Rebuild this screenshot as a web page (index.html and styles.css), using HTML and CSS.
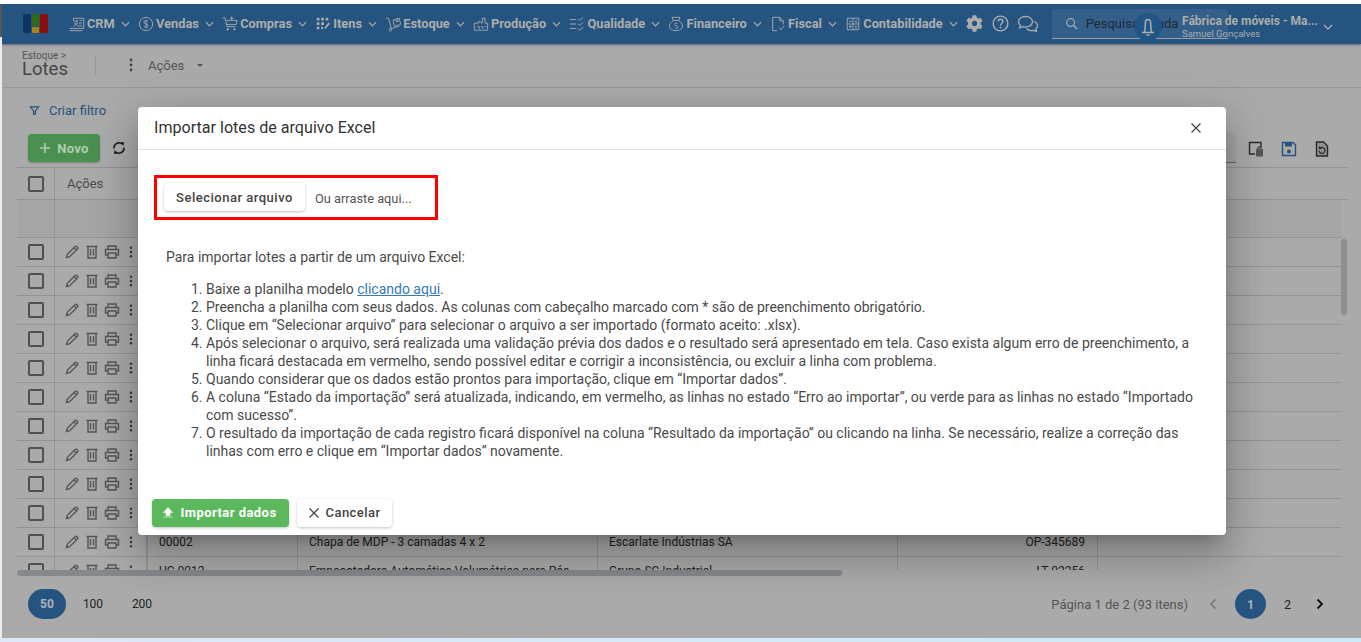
FILE: index.html
```html
<!DOCTYPE html>
<html lang="pt-BR">
<head>
<meta charset="utf-8">
<title>Lotes</title>
<link rel="stylesheet" href="styles.css">
</head>
<body>
<svg class="defs" width="0" height="0" aria-hidden="true">
  <symbol id="chev" viewBox="0 0 10 6"><path d="M1 1l4 4 4-4" fill="none" stroke="currentColor" stroke-width="1.3"/></symbol>
  <symbol id="pencil" viewBox="0 0 16 16"><path d="M2.5 13.5l.8-3.2 7.8-7.8a1.2 1.2 0 0 1 1.7 0l.7.7a1.2 1.2 0 0 1 0 1.7l-7.8 7.8zM10 3.6l2.4 2.4" fill="none" stroke="currentColor" stroke-width="1.4"/></symbol>
  <symbol id="trash" viewBox="0 0 16 16"><path d="M2.500 2.500h11M4 2.500v11.500h8V2.500M6.500 5v6.500M9.500 5v6.500" fill="none" stroke="currentColor" stroke-width="1.4"/></symbol>
  <symbol id="print" viewBox="0 0 16 16"><path d="M4 5V2h8v3M4 11H1.500V5.500h13V11H12M4 9h8v5H4z" fill="none" stroke="currentColor" stroke-width="1.4"/></symbol>
  <symbol id="kebab" viewBox="0 0 4 14"><circle cx="2" cy="2" r="1.4" fill="currentColor"/><circle cx="2" cy="7" r="1.4" fill="currentColor"/><circle cx="2" cy="12" r="1.4" fill="currentColor"/></symbol>
  <symbol id="close" viewBox="0 0 12 12"><path d="M1.500 1.500l9 9M10.500 1.500l-9 9" fill="none" stroke="currentColor" stroke-width="1.2"/></symbol>
</svg>

<div class="frame">
  <header class="topbar">
    <svg class="logo" viewBox="0 0 25 19" aria-hidden="true">
      <rect x="0" y="0" width="8" height="19" rx="1.5" fill="#0c3660"/>
      <rect x="9" y="0" width="7" height="12" rx="1" fill="#2f6b10"/>
      <rect x="9" y="13" width="7" height="6" rx="1" fill="#ad8010"/>
      <rect x="17" y="0" width="8" height="19" rx="1.5" fill="#8b0d0d"/>
    </svg>
    <nav class="nav">
      <a class="nav-item">
        <svg class="nav-ico" viewBox="0 0 18 18"><path d="M5 6V2.500h11.500V14H1M1 16.500h14M8 5h2M12 5h2.500M11 8h3.500M11 11h3.500" fill="none" stroke="currentColor"/><circle cx="8" cy="7.500" r="1.600" fill="none" stroke="currentColor"/><path d="M5.500 12c0-3 5-3 5 0" fill="none" stroke="currentColor"/></svg>
        <span>CRM</span><svg class="chev"><use href="#chev"/></svg>
      </a>
      <a class="nav-item">
        <svg class="nav-ico" viewBox="0 0 18 18"><circle cx="9" cy="9" r="7.500" fill="none" stroke="currentColor"/><path d="M11.500 6.500C11 5 6.500 5 6.500 7c0 2.500 5 1.500 5 4 0 2-4.500 2-5 .5M9 4v10" fill="none" stroke="currentColor"/></svg>
        <span>Vendas</span><svg class="chev"><use href="#chev"/></svg>
      </a>
      <a class="nav-item">
        <svg class="nav-ico" viewBox="0 0 18 18"><path d="M1 2h2.500l2 10h10M5 5h12l-1 4.500H5.500M11 .5v4M9 2.500h4" fill="none" stroke="currentColor"/><circle cx="6.500" cy="15" r="1.300" fill="currentColor"/><circle cx="14" cy="15" r="1.300" fill="currentColor"/></svg>
        <span>Compras</span><svg class="chev"><use href="#chev"/></svg>
      </a>
      <a class="nav-item">
        <svg class="nav-ico" viewBox="0 0 18 18"><path d="M2 2h3v3H2zM7 2h3v3H7zM12 2h3v3h-3zM2 7h3v3H2zM7 7h3v3H7zM2 12h3v3H2zM7 12h2v3H7z" fill="currentColor"/><path d="M11 14l5-6" fill="none" stroke="currentColor" stroke-width="2"/></svg>
        <span>Itens</span><svg class="chev"><use href="#chev"/></svg>
      </a>
      <a class="nav-item">
        <svg class="nav-ico" viewBox="0 0 18 18"><path d="M1 2l3 1 3 11M9 4.500l7-2 1.500 7-7 2zM12 3.500l.8 3 2-.5-.8-3M7 14l9-2.500" fill="none" stroke="currentColor"/><circle cx="6" cy="15.500" r="1.500" fill="none" stroke="currentColor"/></svg>
        <span>Estoque</span><svg class="chev"><use href="#chev"/></svg>
      </a>
      <a class="nav-item">
        <svg class="nav-ico" viewBox="0 0 18 18"><path d="M1.500 16V8l5 0V6l4 2V2.500h3V8h3v8zM5 12h2v2.500M9 12h2v2.500M13 12h2" fill="none" stroke="currentColor"/></svg>
        <span>Produção</span><svg class="chev"><use href="#chev"/></svg>
      </a>
      <a class="nav-item">
        <svg class="nav-ico" viewBox="0 0 18 18"><path d="M1 4h7M1 9h7M1 14h7M10 3l2 2 4-3.500M10 8.500l2 2 4-3.500M10 14l2 2 4-3.500" fill="none" stroke="currentColor"/></svg>
        <span>Qualidade</span><svg class="chev"><use href="#chev"/></svg>
      </a>
      <a class="nav-item">
        <svg class="nav-ico" viewBox="0 0 18 18"><path d="M6 5L4.500 1.500h9L12 5zM6 5c-8 6-4 11.500 3 11.500S20 11 12 5" fill="none" stroke="currentColor"/><path d="M11 8.500C10.500 7.500 7.500 7.500 7.500 9.500s3.500 1 3.500 3-3 1.500-3.500.5" fill="none" stroke="currentColor"/></svg>
        <span>Financeiro</span><svg class="chev"><use href="#chev"/></svg>
      </a>
      <a class="nav-item">
        <svg class="nav-ico" viewBox="0 0 18 18"><path d="M8 16.500H3v-15h8l4 4v4M11 1.500v4h4M10 13l2.500 2.500L16 11" fill="none" stroke="currentColor"/></svg>
        <span>Fiscal</span><svg class="chev"><use href="#chev"/></svg>
      </a>
      <a class="nav-item">
        <svg class="nav-ico" viewBox="0 0 18 18"><path d="M2.500 2.500h13v13h-13zM2.500 9h13M9 2.500v13M4.500 6h3M11 5l2.500 2.500M13.500 5L11 7.500M4.500 12h3M6 10.500v3M11 11.500h2.500M11 13.500h2.500" fill="none" stroke="currentColor"/></svg>
        <span>Contabilidade</span><svg class="chev"><use href="#chev"/></svg>
      </a>
    </nav>
    <div class="top-tools">
      <svg class="tool-ico" viewBox="0 0 512 512"><path fill="currentColor" d="M487 316l-43-25c4-23 4-47 0-70l43-25c5-3 7-9 6-14-11-36-30-68-55-95-4-4-10-5-15-2l-43 25c-18-15-39-27-61-35V25c0-6-4-11-9-12-37-8-75-8-110 0-6 1-10 6-10 12v50c-22 8-43 20-61 35L86 85c-5-3-11-2-15 2-25 27-44 59-55 95-2 5 1 11 6 14l43 25c-4 23-4 47 0 70l-43 25c-5 3-8 9-6 14 11 36 30 68 55 95 4 4 10 5 15 2l43-25c18 15 39 27 61 35v50c0 6 4 11 10 12 37 8 75 8 110 0 5-1 9-6 9-12v-50c22-8 43-20 61-35l43 25c5 3 11 2 15-2 25-27 44-59 55-95 1-5-1-11-6-14zM256 336c-44 0-80-36-80-80s36-80 80-80 80 36 80 80-36 80-80 80z"/></svg>
      <svg class="tool-ico" viewBox="0 0 18 18"><circle cx="9" cy="9" r="7.800" fill="none" stroke="currentColor" stroke-width="1.500"/><path d="M6.500 7c0-3.300 5-3.300 5 0 0 2-2.500 2-2.500 4" fill="none" stroke="currentColor" stroke-width="1.500"/><circle cx="9" cy="13.300" r="1" fill="currentColor"/></svg>
      <svg class="tool-ico tool-chat" viewBox="0 0 22 18"><path d="M8.500 1.500c-4 0-7 2.300-7 5.300 0 1.500.8 2.800 2 3.700L2.500 13l3.500-1.300c3.500 1 9.500-.5 9.500-5 0-3-3-5.200-7-5.200zM17 6.500c2.200.8 3.500 2.500 3.500 4.300 0 1.300-.7 2.400-1.800 3.200l.8 2.500-3.200-1.200c-2.500.6-5.300 0-6.800-1.800" fill="none" stroke="currentColor" stroke-width="1.300"/></svg>
    </div>
    <div class="search">
      <svg class="search-ico" viewBox="0 0 14 14"><circle cx="6" cy="6" r="4.200" fill="none" stroke="currentColor" stroke-width="1.300"/><path d="M9 9l4 4" stroke="currentColor" stroke-width="1.500"/></svg>
      <span class="search-text">Pesquisar ajuda</span>
    </div>
    <div class="account">
      <span class="bell">
        <svg viewBox="0 0 16 20"><path d="M2 15.500h12M6.500 18h3M4.500 15.500c1-4 .5-8 1-10.500a2.500 2.500 0 0 1 5 0c.5 2.500 0 6.500 1 10.500" fill="none" stroke="currentColor" stroke-width="1.500"/></svg>
      </span>
      <span class="org"><b>Fábrica de móveis - Ma...</b><small>Samuel Gonçalves</small></span>
      <svg class="chev chev-org"><use href="#chev"/></svg>
    </div>
  </header>

  <section class="subhead">
    <div class="crumb"><small>Estoque &gt;</small><h1>Lotes</h1></div>
    <div class="sub-actions">
      <svg class="kebab-sm"><use href="#kebab"/></svg>
      <span>Ações</span>
      <i class="caret"></i>
    </div>
  </section>

  <div class="filterbar">
    <svg class="funnel" viewBox="0 0 12 12"><path d="M1.500 2h9L7 6.500V10H5V6.500z" fill="none" stroke="currentColor" stroke-width="1.300"/></svg>
    <span>Criar filtro</span>
  </div>

  <div class="toolbar">
    <button class="btn-new"><svg viewBox="0 0 12 12"><path d="M6 1v10M1 6h10" stroke="currentColor" stroke-width="1.600"/></svg>Novo</button>
    <svg class="refresh" viewBox="0 0 14 14"><path d="M2 7.500A5 5 0 0 1 10.500 3.300M12 6.500A5 5 0 0 1 3.500 10.700" fill="none" stroke="currentColor" stroke-width="1.400"/><path d="M9 1l3 .5-.5 3.500zM5 13l-3-.5.5-3.500z" fill="currentColor"/></svg>
    <span class="tb-spacer"></span>
    <span class="tb-input"></span>
    <div class="tb-icons">
      <svg viewBox="0 0 16 16"><path d="M13 6V1.500H1.500V13H7" fill="none" stroke="#2a2a2e" stroke-width="1.400"/><rect x="8" y="7.500" width="7" height="8" rx="1" fill="#55575a"/><path d="M10 7.500V6h3v1.500" fill="none" stroke="#2a2a2e"/></svg>
      <svg viewBox="0 0 16 16"><path d="M2 1.500h10l2.500 2.500v10.500H1.500v-13z" fill="none" stroke="#24547f" stroke-width="1.400"/><path d="M4 1.500h7v4H4z" fill="#24547f"/><circle cx="8" cy="10.500" r="2" fill="#24547f"/></svg>
      <svg viewBox="0 0 16 16"><path d="M2.500 1h7l4 4v10h-11z" fill="#8f8f8f" stroke="#2a2a2e" stroke-width="1.400"/><path d="M5 9.500a3 3 0 1 0 1-2.300M5.500 5.500v2h2" fill="none" stroke="#2a2a2e" stroke-width="1.200"/></svg>
    </div>
  </div>

  <div class="table">
    <div class="thead">
      <span class="c-check"><i class="check"></i></span>
      <span class="c-actions th-label">Ações</span>
    </div>
    <div class="tfilter"><span class="c-check"></span><span class="c-actions"></span></div>
    <div class="tbody">
      <div class="rows">
        <div class="row"><span class="c-check"><i class="check"></i></span><span class="c-actions"><svg><use href="#pencil"/></svg><svg><use href="#trash"/></svg><svg><use href="#print"/></svg><svg class="k"><use href="#kebab"/></svg></span><span class="c-code"></span><span class="c-desc"></span><span class="c-sup"></span><span class="c-lot"></span></div>
        <div class="row"><span class="c-check"><i class="check"></i></span><span class="c-actions"><svg><use href="#pencil"/></svg><svg><use href="#trash"/></svg><svg><use href="#print"/></svg><svg class="k"><use href="#kebab"/></svg></span><span class="c-code"></span><span class="c-desc"></span><span class="c-sup"></span><span class="c-lot"></span></div>
        <div class="row"><span class="c-check"><i class="check"></i></span><span class="c-actions"><svg><use href="#pencil"/></svg><svg><use href="#trash"/></svg><svg><use href="#print"/></svg><svg class="k"><use href="#kebab"/></svg></span><span class="c-code"></span><span class="c-desc"></span><span class="c-sup"></span><span class="c-lot"></span></div>
        <div class="row"><span class="c-check"><i class="check"></i></span><span class="c-actions"><svg><use href="#pencil"/></svg><svg><use href="#trash"/></svg><svg><use href="#print"/></svg><svg class="k"><use href="#kebab"/></svg></span><span class="c-code"></span><span class="c-desc"></span><span class="c-sup"></span><span class="c-lot"></span></div>
        <div class="row"><span class="c-check"><i class="check"></i></span><span class="c-actions"><svg><use href="#pencil"/></svg><svg><use href="#trash"/></svg><svg><use href="#print"/></svg><svg class="k"><use href="#kebab"/></svg></span><span class="c-code"></span><span class="c-desc"></span><span class="c-sup"></span><span class="c-lot"></span></div>
        <div class="row"><span class="c-check"><i class="check"></i></span><span class="c-actions"><svg><use href="#pencil"/></svg><svg><use href="#trash"/></svg><svg><use href="#print"/></svg><svg class="k"><use href="#kebab"/></svg></span><span class="c-code"></span><span class="c-desc"></span><span class="c-sup"></span><span class="c-lot"></span></div>
        <div class="row"><span class="c-check"><i class="check"></i></span><span class="c-actions"><svg><use href="#pencil"/></svg><svg><use href="#trash"/></svg><svg><use href="#print"/></svg><svg class="k"><use href="#kebab"/></svg></span><span class="c-code"></span><span class="c-desc"></span><span class="c-sup"></span><span class="c-lot"></span></div>
        <div class="row"><span class="c-check"><i class="check"></i></span><span class="c-actions"><svg><use href="#pencil"/></svg><svg><use href="#trash"/></svg><svg><use href="#print"/></svg><svg class="k"><use href="#kebab"/></svg></span><span class="c-code"></span><span class="c-desc"></span><span class="c-sup"></span><span class="c-lot"></span></div>
        <div class="row"><span class="c-check"><i class="check"></i></span><span class="c-actions"><svg><use href="#pencil"/></svg><svg><use href="#trash"/></svg><svg><use href="#print"/></svg><svg class="k"><use href="#kebab"/></svg></span><span class="c-code"></span><span class="c-desc"></span><span class="c-sup"></span><span class="c-lot"></span></div>
        <div class="row"><span class="c-check"><i class="check"></i></span><span class="c-actions"><svg><use href="#pencil"/></svg><svg><use href="#trash"/></svg><svg><use href="#print"/></svg><svg class="k"><use href="#kebab"/></svg></span><span class="c-code"></span><span class="c-desc"></span><span class="c-sup"></span><span class="c-lot"></span></div>
        <div class="row"><span class="c-check"><i class="check"></i></span><span class="c-actions"><svg><use href="#pencil"/></svg><svg><use href="#trash"/></svg><svg><use href="#print"/></svg><svg class="k"><use href="#kebab"/></svg></span><span class="c-code">00002</span><span class="c-desc">Chapa de MDP - 3 camadas 4 x 2</span><span class="c-sup">Escarlate Indústrias SA</span><span class="c-lot">OP-345689</span></div>
        <div class="row"><span class="c-check"><i class="check"></i></span><span class="c-actions"><svg><use href="#pencil"/></svg><svg><use href="#trash"/></svg><svg><use href="#print"/></svg><svg class="k"><use href="#kebab"/></svg></span><span class="c-code">UC 0012</span><span class="c-desc">Empacotadora Automática Volumétrica para Pós</span><span class="c-sup">Grupo SC Industrial</span><span class="c-lot">LT 02256</span></div>
      </div>
      <div class="vscroll"><i></i></div>
    </div>
    <div class="hscroll"><i></i></div>
  </div>

  <footer class="pager">
    <div class="sizes"><span class="size on">50</span><span class="size">100</span><span class="size">200</span></div>
    <div class="pages">
      <span class="page-info">Página 1 de 2 (93 itens)</span>
      <svg class="arrow off" viewBox="0 0 8 12"><path d="M6.500 1.500L2 6l4.500 4.500" fill="none" stroke="currentColor" stroke-width="1.500"/></svg>
      <span class="page on">1</span>
      <span class="page">2</span>
      <svg class="arrow" viewBox="0 0 8 12"><path d="M1.500 1.500L6 6l-4.500 4.500" fill="none" stroke="currentColor" stroke-width="1.800"/></svg>
    </div>
  </footer>

  <div class="modal" role="dialog">
    <div class="modal-head">
      <h2>Importar lotes de arquivo Excel</h2>
      <svg class="modal-close"><use href="#close"/></svg>
    </div>
    <div class="modal-body">
      <div class="upload">
        <button class="btn-file">Selecionar arquivo</button>
        <span class="drop-hint">Ou arraste aqui...</span>
      </div>
      <div class="help">
        <p>Para importar lotes a partir de um arquivo Excel:</p>
        <ol>
          <li>Baixe a planilha modelo <a href="#">clicando aqui</a>.</li>
          <li>Preencha a planilha com seus dados. As colunas com cabeçalho marcado com * são de preenchimento obrigatório.</li>
          <li>Clique em “Selecionar arquivo” para selecionar o arquivo a ser importado (formato aceito: .xlsx).</li>
          <li>Após selecionar o arquivo, será realizada uma validação prévia dos dados e o resultado será apresentado em tela. Caso exista algum erro de preenchimento, a linha ficará destacada em vermelho, sendo possível editar e corrigir a inconsistência, ou excluir a linha com problema.</li>
          <li>Quando considerar que os dados estão prontos para importação, clique em “Importar dados”.</li>
          <li>A coluna “Estado da importação” será atualizada, indicando, em vermelho, as linhas no estado “Erro ao importar”, ou verde para as linhas no estado “Importado com sucesso”.</li>
          <li>O resultado da importação de cada registro ficará disponível na coluna “Resultado da importação” ou clicando na linha. Se necessário, realize a correção das linhas com erro e clique em “Importar dados” novamente.</li>
        </ol>
      </div>
    </div>
    <div class="modal-foot">
      <button class="btn-import"><svg viewBox="0 0 12 12"><path d="M6 1L1.500 6H4v3h4V6h2.500zM1.500 10.500h9" fill="currentColor" stroke="currentColor" stroke-width=".6"/></svg>Importar dados</button>
      <button class="btn-cancel"><svg><use href="#close"/></svg>Cancelar</button>
    </div>
  </div>
</div>

<div class="bottom-strip"></div>
</body>
</html>
```

FILE: styles.css
```css
* { box-sizing: border-box; }
html, body { height: 100%; }
body {
  margin: 0;
  padding: 4px 0 0 2px;
  height: 642px;
  overflow: hidden;
  display: flex;
  flex-direction: column;
  font-family: Roboto, "Liberation Sans", sans-serif;
  color: #444;
  background: linear-gradient(to bottom, #fff 4px, #555 4px, #555 37px, #ececec 37px);
}
.defs { position: absolute; }
.frame {
  position: relative;
  flex: 1;
  min-height: 0;
  display: flex;
  flex-direction: column;
  overflow: hidden;
  background: #aaaaaa;
}
.bottom-strip {
  flex: 0 0 4px;
  margin-left: -2px;
  background: linear-gradient(to right, #dfe8f7, #cdeaf6);
}

/* top bar */
.topbar {
  flex: 0 0 40px;
  position: relative;
  z-index: 1;
  display: flex;
  align-items: center;
  background: #24547f;
  color: #adadad;
  box-shadow: 0 1px 2px rgba(0,0,0,.4);
  padding-left: 21px;
}
.logo { width: 25px; height: 19px; flex: none; margin: 0 21px 2px 0; }
.nav { display: flex; align-items: center; gap: 8.300px; padding-bottom: 1px; }
.nav-item {
  display: flex;
  align-items: center;
  gap: 2px;
  font-size: 12.800px;
  font-weight: 700;
  white-space: nowrap;
}
.nav-ico { width: 16px; height: 16px; flex: none; }
.chev { width: 9px; height: 6px; margin-left: 4px; flex: none; }
.top-tools { display: flex; align-items: center; gap: 9px; margin-left: 8px; padding-bottom: 1px; }
.tool-ico { width: 17px; height: 17px; flex: none; }
.tool-chat { width: 22px; height: 18px; margin-left: -1px; }
.search {
  display: flex;
  align-items: center;
  width: 176px;
  height: 30px;
  margin-left: 13px;
  padding-left: 13px;
  background: #335f88;
  border-bottom: 1px solid #8ba0b5;
  border-radius: 3px 3px 0 0;
  font-size: 13px;
  color: #1c2a38;
}
.search-ico { width: 13px; height: 13px; margin-right: 8px; color: #9fb0c0; }
.account {
  position: absolute;
  top: 0;
  left: 1132px;
  height: 40px;
  display: flex;
  align-items: center;
}
.bell {
  width: 28px;
  height: 28px;
  margin-top: 5px;
  border-radius: 50%;
  background: #205686;
  display: flex;
  align-items: center;
  justify-content: center;
}
.bell svg { width: 16px; height: 20px; }
.org { display: flex; flex-direction: column; margin: 6px 0 0 20px; width: 141px; }
.org b { font-size: 12px; font-weight: 700; line-height: 14px; white-space: nowrap; }
.org small { font-size: 9.500px; line-height: 12px; }
.chev-org { width: 10px; height: 6px; margin: 6px 0 0 0; }

/* sub header */
.subhead {
  flex: 0 0 44px;
  display: flex;
  align-items: center;
  padding-left: 20px;
  border-bottom: 1px solid #989898;
}
.crumb { width: 73px; margin-top: -2px; }
.crumb small { display: block; font-size: 10px; line-height: 10px; color: #555; }
.crumb h1 { margin: 0; font-size: 18.500px; line-height: 17px; font-weight: 400; color: #464646; }
.sub-actions {
  height: 20px;
  display: flex;
  align-items: center;
  padding-left: 33px;
  border-left: 1px solid #989898;
  font-size: 13px;
  color: #555;
  margin-top: -1px;
}
.kebab-sm { width: 4px; height: 14px; margin-right: 15px; color: #444; }
.caret {
  margin-left: 13px;
  border: 3px solid transparent;
  border-top: 3.500px solid #555;
  border-bottom: 0;
}

/* filter */
.filterbar {
  flex: 0 0 46px;
  display: flex;
  align-items: center;
  padding: 0 0 1px 27px;
  font-size: 13px;
  color: #27527a;
}
.funnel { width: 11px; height: 11px; margin-right: 9px; }

/* toolbar */
.toolbar {
  flex: 0 0 30px;
  display: flex;
  align-items: flex-start;
  padding-left: 26px;
}
.btn-new {
  height: 28px;
  width: 72px;
  padding: 0;
  border: 0;
  border-radius: 4px;
  background: #4a9050;
  color: #afcdb0;
  font: 700 13px Roboto, sans-serif;
  letter-spacing: .3px;
  display: flex;
  align-items: center;
  justify-content: center;
  gap: 6px;
  box-shadow: 0 1px 2px rgba(0,0,0,.25);
}
.btn-new svg { width: 12px; height: 12px; }
.refresh { width: 14px; height: 14px; margin: 7px 0 0 12px; color: #111; }
.tb-spacer { flex: 1; }
.tb-input { width: 12px; height: 30px; background: #a4a4a4; border-bottom: 1px solid #666; margin-right: 12px; margin-top: -1px; }
.tb-icons { display: flex; gap: 17px; padding: 7px 31px 0 0; }
.tb-icons svg { width: 16px; height: 16px; }

/* table */
.table { margin: 3px 14px 0 15px; display: flex; flex-direction: column; }
.thead, .tfilter, .row { display: flex; }
.thead { height: 33px; border-top: 1px solid #939393; border-bottom: 1px solid #939393; }
.tfilter { height: 38px; margin-right: 6px; background: #a5a5a5; border-bottom: 1px solid #939393; }
.c-check { flex: 0 0 38px; display: flex; align-items: center; padding-left: 11px; border-right: 1px solid #939393; }
.c-actions { flex: 0 0 93px; display: flex; align-items: center; padding-left: 9px; gap: 5px; border-right: 2px solid #939393; }
.th-label { font-size: 13px; color: #4a4a4a; padding-left: 12px; border-right: 0; }
.tfilter .c-actions { border-right: 0; }
.check { display: block; width: 16px; height: 16px; border: 2px solid #505050; border-radius: 2px; }
.tbody { position: relative; display: flex; height: 332px; overflow: hidden; }
.rows { flex: 1; }
.row { height: 29px; border-bottom: 1px solid #939393; font-size: 12px; color: #222; align-items: stretch; }
.row > span { display: flex; align-items: center; }
.row .c-actions svg { width: 16px; height: 16px; color: #555; flex: none; }
.row .c-actions svg:nth-child(2) { margin-left: -1px; }
.row .c-actions svg:nth-child(3) { margin-left: -1px; }
.row .c-actions .k { width: 4px; height: 12px; color: #3a3a3a; margin-left: 4px; }
.c-code, .c-desc, .c-sup, .c-lot { border-right: 1px solid #939393; white-space: nowrap; overflow: hidden; }
.c-code { flex: 0 0 150px; padding-left: 11px; }
.c-desc { flex: 0 0 300px; padding-left: 11px; }
.c-sup { flex: 0 0 300px; padding-left: 11px; }
.c-lot { flex: 0 0 200px; justify-content: flex-end; padding-right: 12px; }
.vscroll { flex: 0 0 6px; }
.vscroll i { display: block; height: 76px; margin-top: 1px; background: #8e9194; border-radius: 3px; }
.hscroll { height: 6px; }
.hscroll i { display: block; width: 825px; height: 6px; background: #85898d; border-radius: 3px; }

/* pager */
.pager {
  flex: 1;
  display: flex;
  align-items: center;
  justify-content: space-between;
  padding: 0 37px 6px 26px;
  font-size: 12px;
  color: #222;
}
.sizes { display: flex; align-items: center; gap: 11px; }
.size { min-width: 38px; height: 30px; display: flex; align-items: center; justify-content: center; }
.size.on { background: #24547f; color: #adb5bc; font-weight: 700; border-radius: 15px; margin-right: -3px; }
.pages { display: flex; align-items: center; }
.page-info { color: #555; font-size: 13px; margin-right: 21px; }
.arrow { width: 8px; height: 12px; color: #111; }
.arrow.off { color: #777; margin-right: 18px; }
.page { width: 31px; height: 30px; display: flex; align-items: center; justify-content: center; font-size: 12.500px; margin-right: 6px; }
.page.on { background: #24547f; color: #adb5bc; font-weight: 700; border-radius: 50%; }
.page + .arrow { margin-left: 7px; }

/* dialog */
.modal {
  position: absolute;
  z-index: 3;
  left: 136px;
  top: 103px;
  width: 1088px;
  height: 428px;
  display: flex;
  flex-direction: column;
  background: #fff;
  border-radius: 4px;
  box-shadow: 0 11px 15px -7px rgba(0,0,0,.2), 0 24px 38px 3px rgba(0,0,0,.14), 0 9px 46px 8px rgba(0,0,0,.12);
}
.modal-head {
  flex: 0 0 43px;
  display: flex;
  align-items: center;
  justify-content: space-between;
  padding: 0 24px 1px 16px;
  border-bottom: 1px solid #e2e2e2;
}
.modal-head h2 { margin: 0; font-size: 16.100px; font-weight: 400; color: #333; }
.modal-close { width: 12px; height: 12px; color: #444; }
.modal-body { flex: 1; padding: 25px 28px 0 16px; }
.upload {
  width: 284px;
  height: 45px;
  display: flex;
  align-items: center;
  padding-left: 7px;
  border: 3px solid #f00;
  font-size: 12.800px;
  color: #555;
}
.drop-hint { padding-top: 2px; }
.btn-file {
  width: 141px;
  height: 28px;
  margin: 0 10px 1px 0;
  border: 0;
  border-radius: 4px;
  background: #fff;
  color: #444;
  font: 500 13px Roboto, sans-serif;
  letter-spacing: .5px;
  box-shadow: 0 1px 3px rgba(0,0,0,.25);
}
.help { padding-left: 12px; font-size: 14px; line-height: 18px; color: #4a4a4a; }
.help p { margin: 28px 0 14px; }
.help ol { margin: 0; padding-left: 40px; }
.help a { color: #337ab7; }
.modal-foot { flex: 0 0 36px; display: flex; align-items: flex-start; gap: 8px; padding-left: 14px; }
.btn-import, .btn-cancel {
  height: 28px;
  border: 0;
  border-radius: 4px;
  display: flex;
  align-items: center;
  justify-content: center;
  padding: 0 0 1px;
  font-family: Roboto, sans-serif;
  font-size: 13px;
  letter-spacing: .45px;
  box-shadow: 0 1px 3px rgba(0,0,0,.25);
}
.btn-import { width: 137px; background: #5cb85c; color: #fff; font-weight: 700; gap: 6px; padding-right: 2px; }
.btn-import svg { width: 12px; height: 13px; }
.btn-cancel { width: 95px; background: #fff; color: #444; font-weight: 500; gap: 6px; padding-right: 1px; }
.btn-cancel svg { width: 12px; height: 12px; }
```
